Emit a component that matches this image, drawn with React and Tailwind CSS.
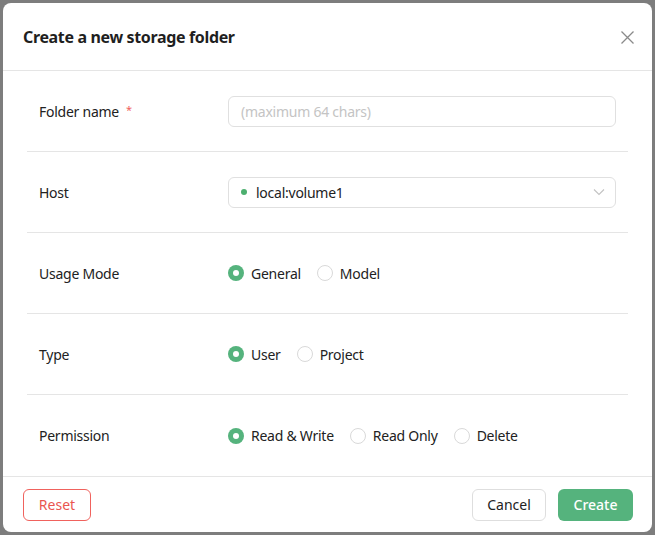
import React from "react";

function Radio({ checked, label }) {
  return (
    <label className="flex items-center gap-[7px] mr-4">
      {checked ? (
        <span className="w-4 h-4 rounded-full bg-[#55b37d] flex items-center justify-center">
          <span className="w-[6px] h-[6px] rounded-full bg-white" />
        </span>
      ) : (
        <span className="w-4 h-4 rounded-full border border-[#d9d9d9] bg-white" />
      )}
      <span className="text-[14px] text-[#222] tracking-[-0.25px]">{label}</span>
    </label>
  );
}

function Row({ label, required, children, last }) {
  return (
    <div className={`flex items-center h-[81px] px-3 ${last ? "" : "border-b border-[#e5e5e5]"}`}>
      <div className="w-[189px] shrink-0 flex items-center text-[14px] text-[#222] tracking-[-0.25px]">
        {label}
        {required && <span className="ml-[7px] text-[#f0625d] text-[11px] leading-none -mt-1">*</span>}
      </div>
      <div className="flex-1 flex items-center">{children}</div>
    </div>
  );
}

export default function App() {
  return (
    <div
      className="w-[655px] h-[535px] bg-[#7d7d7d] p-[3px]"
      style={{ fontFamily: '"Noto Sans", "Open Sans", sans-serif' }}
    >
      <div className="w-[649px] h-[529px] bg-white rounded-[8px] flex flex-col">
        <div className="h-[69px] border-b border-[#e5e5e5] flex items-center justify-between pl-5 pr-[18px]">
          <h1 className="text-[16px] font-bold text-[#1f1f1f] tracking-[-0.35px]">Create a new storage folder</h1>
          <svg width="13" height="13" viewBox="0 0 13 13" className="mt-[1px]">
            <path d="M0.5 0.5 L12.5 12.5 M12.5 0.5 L0.5 12.5" stroke="#8a8a8a" strokeWidth="1.3" />
          </svg>
        </div>
        <div className="flex-1 px-6">
          <Row label="Folder name" required>
            <div className="w-full h-[31px] rounded-[6px] border border-[#e0e0e0] flex items-center px-3 text-[14px] text-[#c4c4c4] tracking-[-0.25px]">
              (maximum 64 chars)
            </div>
          </Row>
          <Row label="Host">
            <div className="w-full h-[31px] rounded-[6px] border border-[#e0e0e0] flex items-center pl-3 pr-[10px] text-[14px] text-[#222] tracking-[-0.25px]">
              <span className="w-[6px] h-[6px] rounded-full bg-[#4caf6f] mr-[9px]" />
              <span className="flex-1">local:volume1</span>
              <svg width="12" height="8" viewBox="0 0 12 8">
                <path d="M1 1.5 L6 6.5 L11 1.5" fill="none" stroke="#c2c2c2" strokeWidth="1.1" />
              </svg>
            </div>
          </Row>
          <Row label="Usage Mode">
            <Radio checked label="General" />
            <Radio label="Model" />
          </Row>
          <Row label="Type">
            <Radio checked label="User" />
            <Radio label="Project" />
          </Row>
          <Row label="Permission" last>
            <Radio checked label="Read & Write" />
            <Radio label="Read Only" />
            <Radio label="Delete" />
          </Row>
        </div>
        <div className="h-[56px] border-t border-[#e5e5e5] flex items-center justify-between pl-5 pr-[19px]">
          <button className="h-8 w-[68px] rounded-[6px] border border-[#f0625d] text-[#ea5550] text-[14px] bg-white">
            Reset
          </button>
          <div className="flex items-center gap-3">
            <button className="h-8 w-[74px] rounded-[6px] border border-[#dedede] text-[#222] text-[14px] bg-white">
              Cancel
            </button>
            <button className="h-8 w-[75px] rounded-[6px] bg-[#55b37d] text-white text-[14px] font-medium">
              Create
            </button>
          </div>
        </div>
      </div>
    </div>
  );
}
